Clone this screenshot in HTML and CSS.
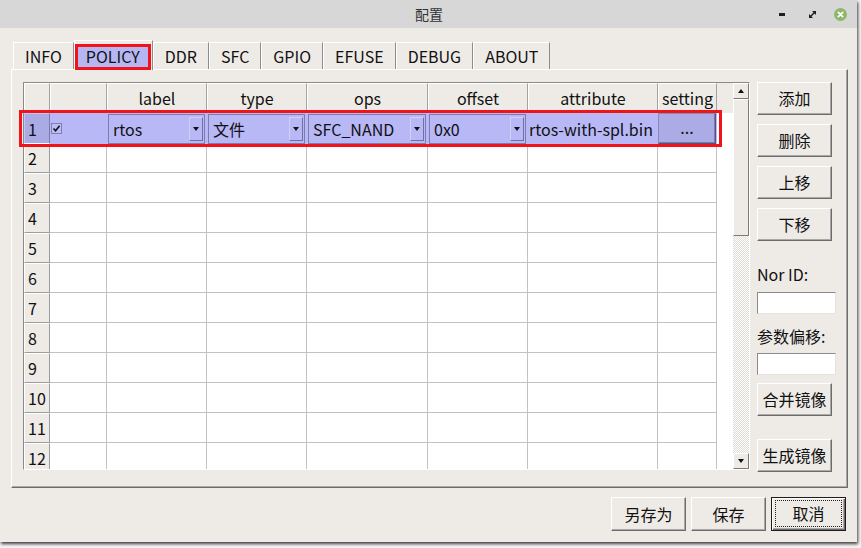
FILE: index.html
```html
<!DOCTYPE html>
<html lang="zh">
<head>
<meta charset="utf-8">
<title>配置</title>
<link rel="stylesheet" href="styles.css">
</head>
<body>
<div class="window">
  <div class="titlebar">
    <div class="title">配置</div>
    <div class="wm">
      <svg class="wm-min" width="6" height="3" viewBox="0 0 6 3"><rect width="6" height="3" fill="#1e1e1e"/></svg>
      <svg class="wm-max" width="7" height="7" viewBox="0 0 7 7"><path d="M3 0H7V4Z M0 3V7H4Z" fill="#1e1e1e"/><path d="M1.5 5.5L5.5 1.5" stroke="#1e1e1e" stroke-width="1.4"/></svg>
      <svg class="wm-close" width="13" height="13" viewBox="0 0 13 13"><circle cx="6.5" cy="6.5" r="6.5" fill="#8db86a"/><path d="M4.3 4.3L8.7 8.7M8.7 4.3L4.3 8.7" stroke="#fff" stroke-width="1.7" stroke-linecap="round"/></svg>
    </div>
  </div>

  <div class="content">
    <div class="tabbar">
      <div class="tab">INFO</div>
      <div class="tab active"><span class="tab-focus">POLICY</span></div>
      <div class="tab">DDR</div>
      <div class="tab">SFC</div>
      <div class="tab">GPIO</div>
      <div class="tab">EFUSE</div>
      <div class="tab">DEBUG</div>
      <div class="tab">ABOUT</div>
    </div>

    <div class="pane">
      <div class="tableframe">
        <div class="viewport">
          <div class="grow head">
            <div class="hc"></div>
            <div class="hc"></div>
            <div class="hc">label</div>
            <div class="hc">type</div>
            <div class="hc">ops</div>
            <div class="hc">offset</div>
            <div class="hc">attribute</div>
            <div class="hc">setting</div>
            <div class="hfill"></div>
          </div>

          <div class="grow sel">
            <div class="rh">1</div>
            <div class="c"><span class="check"><svg width="9" height="9" viewBox="0 0 9 9"><path d="M1.5 4.5L3.6 6.8L7.6 1.8" fill="none" stroke="#111" stroke-width="1.6"/></svg></span></div>
            <div class="c"><div class="combo"><span class="ctext">rtos</span><span class="carrow"><i></i></span></div></div>
            <div class="c"><div class="combo"><span class="ctext">文件</span><span class="carrow"><i></i></span></div></div>
            <div class="c"><div class="combo"><span class="ctext">SFC_NAND</span><span class="carrow"><i></i></span></div></div>
            <div class="c"><div class="combo"><span class="ctext">0x0</span><span class="carrow"><i></i></span></div></div>
            <div class="c attr">rtos-with-spl.bin</div>
            <div class="c"><div class="dots">...</div></div>
            <div class="fill"></div>
          </div>

          <div class="grow"><div class="rh">2</div><div class="c"></div><div class="c"></div><div class="c"></div><div class="c"></div><div class="c"></div><div class="c"></div><div class="c"></div><div class="fill"></div></div>
          <div class="grow"><div class="rh">3</div><div class="c"></div><div class="c"></div><div class="c"></div><div class="c"></div><div class="c"></div><div class="c"></div><div class="c"></div><div class="fill"></div></div>
          <div class="grow"><div class="rh">4</div><div class="c"></div><div class="c"></div><div class="c"></div><div class="c"></div><div class="c"></div><div class="c"></div><div class="c"></div><div class="fill"></div></div>
          <div class="grow"><div class="rh">5</div><div class="c"></div><div class="c"></div><div class="c"></div><div class="c"></div><div class="c"></div><div class="c"></div><div class="c"></div><div class="fill"></div></div>
          <div class="grow"><div class="rh">6</div><div class="c"></div><div class="c"></div><div class="c"></div><div class="c"></div><div class="c"></div><div class="c"></div><div class="c"></div><div class="fill"></div></div>
          <div class="grow"><div class="rh">7</div><div class="c"></div><div class="c"></div><div class="c"></div><div class="c"></div><div class="c"></div><div class="c"></div><div class="c"></div><div class="fill"></div></div>
          <div class="grow"><div class="rh">8</div><div class="c"></div><div class="c"></div><div class="c"></div><div class="c"></div><div class="c"></div><div class="c"></div><div class="c"></div><div class="fill"></div></div>
          <div class="grow"><div class="rh">9</div><div class="c"></div><div class="c"></div><div class="c"></div><div class="c"></div><div class="c"></div><div class="c"></div><div class="c"></div><div class="fill"></div></div>
          <div class="grow"><div class="rh">10</div><div class="c"></div><div class="c"></div><div class="c"></div><div class="c"></div><div class="c"></div><div class="c"></div><div class="c"></div><div class="fill"></div></div>
          <div class="grow"><div class="rh">11</div><div class="c"></div><div class="c"></div><div class="c"></div><div class="c"></div><div class="c"></div><div class="c"></div><div class="c"></div><div class="fill"></div></div>
          <div class="grow"><div class="rh">12</div><div class="c"></div><div class="c"></div><div class="c"></div><div class="c"></div><div class="c"></div><div class="c"></div><div class="c"></div><div class="fill"></div></div>
        </div>

        <div class="vscroll">
          <div class="sb-btn"><i class="up"></i></div>
          <div class="sb-thumb"></div>
          <div class="sb-track"></div>
          <div class="sb-btn"><i class="down"></i></div>
        </div>

        <div class="rowmark"></div>
      </div>

      <div class="side">
        <div class="btn">添加</div>
        <div class="btn gap9">删除</div>
        <div class="btn gap9">上移</div>
        <div class="btn gap9">下移</div>
        <div class="lbl nor">Nor ID:</div>
        <div class="field f1"></div>
        <div class="lbl off">参数偏移:</div>
        <div class="field f2"></div>
        <div class="btn merge">合并镜像</div>
        <div class="btn gen">生成镜像</div>
      </div>
    </div>

    <div class="footer">
      <div class="btn fbtn">另存为</div>
      <div class="btn fbtn">保存</div>
      <div class="btn fbtn default"><span class="focus">取消</span></div>
    </div>
  </div>
</div>
</body>
</html>
```

FILE: styles.css
```css
* { box-sizing: border-box; }
html, body { margin: 0; padding: 0; }
body {
  width: 861px;
  height: 548px;
  overflow: hidden;
  background: #f4f4f4;
  font-family: "Noto Sans CJK SC", "DejaVu Sans", sans-serif;
  font-size: 16px;
  line-height: 20px;
  color: #111;
}

.window {
  width: 857px;
  height: 542px;
  background: #eeebe7;
  display: flex;
  flex-direction: column;
  box-shadow: 1px 2px 3px rgba(0,0,0,0.75);
}

/* title bar */
.titlebar {
  height: 28px;
  flex: none;
  background: #d7d7d7;
  display: grid;
  grid-template-columns: 1fr auto 1fr;
  align-items: center;
}
.title {
  grid-column: 2;
  font-size: 14px;
  color: #333;
  padding-left: 1px;
}
.wm {
  grid-column: 3;
  justify-self: end;
  display: flex;
  align-items: center;
  padding-right: 10px;
}
.wm-max { margin-left: 24px; }
.wm-close { margin-left: 18px; }

/* content */
.content {
  flex: 1;
  display: flex;
  flex-direction: column;
  padding: 12px 9px 11px 11px;
}

.tabbar {
  height: 29px;
  flex: none;
  display: flex;
  align-items: flex-end;
  padding-left: 2px;
}
.tab {
  height: 27px;
  padding: 0 11px;
  border-top: 1px solid #fff;
  border-left: 1px solid #fff;
  border-right: 1px solid #8c8c8c;
  display: flex;
  align-items: center;
  justify-content: center;
  color: #111;
}
.tab.active {
  height: 30px;
  margin-bottom: -1px;
  padding: 3px 1px 0 0;
  position: relative;
  z-index: 2;
  align-items: stretch;
}
.tab-focus {
  display: flex;
  align-items: center;
  justify-content: center;
  padding: 0 8px 2px;
  background: #b6b6f2;
  border: 3px solid #f0141a;
}

.pane {
  height: 419px;
  flex: none;
  display: flex;
  gap: 7px;
  padding: 12px 10px 0 11px;
  border-top: 1px solid #fff;
  border-left: 1px solid #fff;
  border-right: 1px solid #6c6c6c;
  border-bottom: 1px solid #6c6c6c;
  box-shadow: inset -1px -1px 0 #a8a8a8;
}

/* table */
.tableframe {
  width: 727px;
  height: 388px;
  flex: none;
  display: flex;
  position: relative;
  border-top: 1px solid #8a8a8a;
  border-left: 1px solid #8a8a8a;
  border-right: 1px solid #fff;
  border-bottom: 1px solid #fff;
}
.viewport {
  width: 709px;
  overflow: hidden;
  display: flex;
  flex-direction: column;
  background: #fff;
}
.grow {
  display: grid;
  grid-template-columns: 26px 57px 100px 100px 121px 100px 130px 59px 16px;
  height: 30px;
  flex: none;
}
.grow.head { height: 30px; background: #eeebe7; }
.hc {
  border-top: 1px solid #fff;
  border-left: 1px solid #fff;
  border-right: 1px solid #a2a2a2;
  border-bottom: 1px solid #a2a2a2;
  display: flex;
  align-items: center;
  justify-content: center;
  white-space: nowrap;
  padding-bottom: 1px;
}
.hfill { background: #eeebe7; }

.rh {
  background: #eeebe7;
  border-top: 1px solid #fff;
  border-left: 1px solid #fff;
  border-right: 1px solid #9c9c9c;
  border-bottom: 1px solid #9c9c9c;
  padding-left: 3px;
  display: flex;
  align-items: center;
}
.c {
  border-right: 1px solid #c2c2c2;
  border-bottom: 1px solid #c2c2c2;
  min-width: 0;
}
.fill { background: #fff; }

.grow.sel .rh {
  background: #aaaae4;
  border-color: #c4c4f4 #7a7aa8 #7a7aa8 #c4c4f4;
}
.grow.sel .c {
  background: #b8b8f7;
  border-color: #b8b8f7;
  display: flex;
  align-items: center;
}
.grow.sel .fill { background: #fff; }

.check {
  width: 11px;
  height: 11px;
  margin-left: 1px;
  border: 1px solid #8080b0;
  background: #bcbcf6;
  display: flex;
  align-items: center;
  justify-content: center;
}
.check svg { display: block; }

.combo {
  align-self: stretch;
  margin: 1px 1px 0 1px;
  flex: 1;
  min-width: 0;
  border: 1px solid #7c7cb0;
  background: #b8b8f7;
  display: flex;
  align-items: center;
  padding: 2px 1px 2px 4px;
}
.ctext { flex: 1; white-space: nowrap; line-height: 24px; }
.carrow {
  width: 14px;
  flex: none;
  align-self: stretch;
  border: 1px solid;
  border-color: #d0d0fa #7070a0 #7070a0 #d0d0fa;
  background: #b8b8f7;
  display: flex;
  align-items: center;
  justify-content: center;
}
.carrow i {
  width: 0;
  height: 0;
  border-left: 3.5px solid transparent;
  border-right: 3.5px solid transparent;
  border-top: 4px solid #111;
}
.grow.sel .c.attr {
  padding-left: 1px;
  white-space: nowrap;
}
.dots {
  flex: 1;
  align-self: stretch;
  background: #ababe6;
  border: 1px solid;
  border-color: #8888bb #54547e #54547e #8888bb;
  box-shadow: inset -1px -1px 0 #7a7aaa;
  display: flex;
  align-items: center;
  justify-content: center;
  padding-bottom: 3px;
}

/* scrollbar */
.vscroll {
  width: 16px;
  flex: none;
  display: flex;
  flex-direction: column;
}
.sb-btn {
  height: 16px;
  flex: none;
  background: #eeebe7;
  border: 1px solid;
  border-color: #fff #7a7a7a #7a7a7a #fff;
  display: flex;
  align-items: center;
  justify-content: center;
}
.sb-btn i { width: 0; height: 0; border-left: 3.5px solid transparent; border-right: 3.5px solid transparent; }
.sb-btn i.up { border-bottom: 4px solid #111; }
.sb-btn i.down { border-top: 4px solid #111; }
.sb-thumb {
  height: 137px;
  flex: none;
  background: #eeebe7;
  border: 1px solid;
  border-color: #fff #7a7a7a #7a7a7a #fff;
}
.sb-track {
  flex: 1;
  background: repeating-conic-gradient(#ffffff 0 25%, #dedbd6 0 50%) 0 0 / 2px 2px;
}

.rowmark {
  position: absolute;
  left: -5px;
  top: 27px;
  width: 703px;
  height: 37px;
  border: 3px solid #f0141a;
  pointer-events: none;
}

/* side panel */
.side {
  width: 79px;
  flex: none;
  display: flex;
  flex-direction: column;
  align-items: flex-start;
}
.btn {
  width: 75px;
  height: 33px;
  flex: none;
  background: #eeebe7;
  border: 1px solid;
  border-color: #fff #6c6c6c #6c6c6c #fff;
  box-shadow: inset -1px -1px 0 #a8a8a8;
  display: flex;
  align-items: center;
  justify-content: center;
  padding-bottom: 1px;
  color: #111;
}
.gap9 { margin-top: 9px; }
.lbl { height: 20px; white-space: nowrap; }
.lbl.nor { margin-top: 23px; }
.lbl.off { margin-top: 12px; }
.field {
  width: 79px;
  height: 22px;
  flex: none;
  background: #fff;
  border: 1px solid;
  border-color: #8a8a8a #e6e3df #e6e3df #8a8a8a;
}
.f1 { margin-top: 8px; }
.f2 { margin-top: 7px; }
.btn.merge { margin-top: 8px; }
.btn.gen { margin-top: 23px; }

/* footer */
.footer {
  margin-top: 9px;
  display: flex;
  justify-content: flex-end;
  gap: 5px;
  padding-right: 2px;
}
.fbtn { height: 34px; }
.fbtn.default {
  border: 1px solid #1c1c1c;
  box-shadow: inset 1px 1px 0 #fff, inset -1px -1px 0 #6c6c6c, inset -2px -2px 0 #a8a8a8;
  padding: 2px 3px 3px 3px;
  align-items: stretch;
}
.focus {
  flex: 1;
  border: 1px dotted #222;
  display: flex;
  align-items: center;
  justify-content: center;
  padding-bottom: 1px;
}
```
